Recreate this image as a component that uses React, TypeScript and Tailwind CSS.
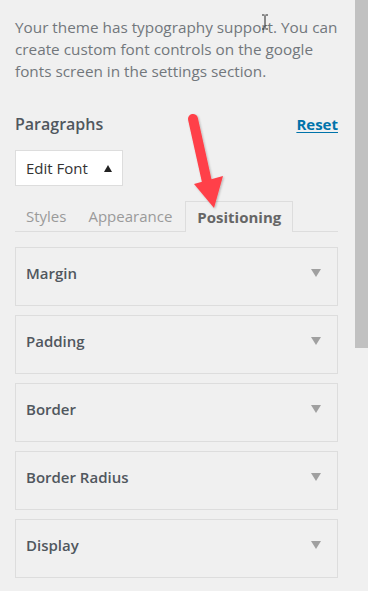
const sections = ['Margin', 'Padding', 'Border', 'Border Radius', 'Display'];

function Arrow() {
  return (
    <svg
      className="absolute left-[180px] top-[110px] pointer-events-none"
      width="60"
      height="110"
      viewBox="0 0 60 110"
    >
      <defs>
        <filter id="sh" x="-30%" y="-30%" width="160%" height="160%">
          <feDropShadow dx="1" dy="1" stdDeviation="1.2" floodColor="#000" floodOpacity="0.25" />
        </filter>
      </defs>
      <g filter="url(#sh)">
        <line x1="13" y1="9" x2="27" y2="72" stroke="#ff4148" strokeWidth="10" strokeLinecap="round" />
        <polygon points="14,74 43,66 34,98" fill="#ff4148" />
      </g>
    </svg>
  );
}

function Cursor() {
  return (
    <svg className="absolute left-[261px] top-[14px] pointer-events-none" width="8" height="16" viewBox="0 0 8 16">
      <path d="M1 1h2.5M4.5 1H7M4 1.5v13M1 15h2.5M4.5 15H7" stroke="#222" strokeWidth="1" fill="none" />
    </svg>
  );
}

export default function App() {
  return (
    <div
      className="relative flex w-[368px] h-[591px] bg-[#f0f0f0] overflow-hidden"
      style={{ fontFamily: '"Open Sans", "Noto Sans", sans-serif' }}
    >
      <div className="w-[355px] pl-[15px] pr-[17px] pt-[16px]">
        <p className="-mr-[4px] text-[15.3px] leading-[22px] text-[#72777c]">
          Your theme has typography support. You can create custom font controls on the google fonts screen in the
          settings section.
        </p>

        <div className="mt-[30px] flex items-center justify-between h-[24px]">
          <h3 className="text-[16px] font-semibold text-[#50575e]">Paragraphs</h3>
          <a className="text-[15px] font-bold text-[#0073aa] underline underline-offset-2">Reset</a>
        </div>

        <button className="mt-[14px] flex items-center h-[36px] w-[108px] pl-[10px] bg-white border border-[#dddddd] text-[15px] text-[#333]">
          <span>Edit Font</span>
          <span className="ml-[16px] w-0 h-0 border-l-[4.5px] border-r-[4.5px] border-b-[7px] border-l-transparent border-r-transparent border-b-[#222]" />
        </button>

        <div className="mt-[15px] flex items-end h-[31px] border-b border-[#dddddd]">
          <span className="px-[11px] h-[30px] flex items-center text-[15px] text-[#9a9a9a]">Styles</span>
          <span className="px-[11px] h-[30px] flex items-center text-[15px] text-[#9a9a9a]">Appearance</span>
          <span className="ml-[2px] px-[11px] h-[31px] -mb-px flex items-center text-[15px] font-bold text-[#666] bg-[#f0f0f0] border border-b-0 border-[#dddddd]">
            Positioning
          </span>
        </div>

        <div className="mt-[15px] flex flex-col gap-[9px]">
          {sections.map((s) => (
            <div key={s} className="h-[59px] border border-[#dddddd] px-[10px] pt-[14px] flex justify-between">
              <span className="text-[15px] leading-[22px] font-semibold text-[#50575e]">{s}</span>
              <span className="mt-[7px] mr-[6px] w-0 h-0 border-l-[5px] border-r-[5px] border-t-[8px] border-l-transparent border-r-transparent border-t-[#a0a0a0]" />
            </div>
          ))}
        </div>
      </div>

      <div className="w-[13px] flex flex-col">
        <div className="h-[348px] bg-[#c1c1c1]" />
      </div>

      <Arrow />
      <Cursor />
    </div>
  );
}
